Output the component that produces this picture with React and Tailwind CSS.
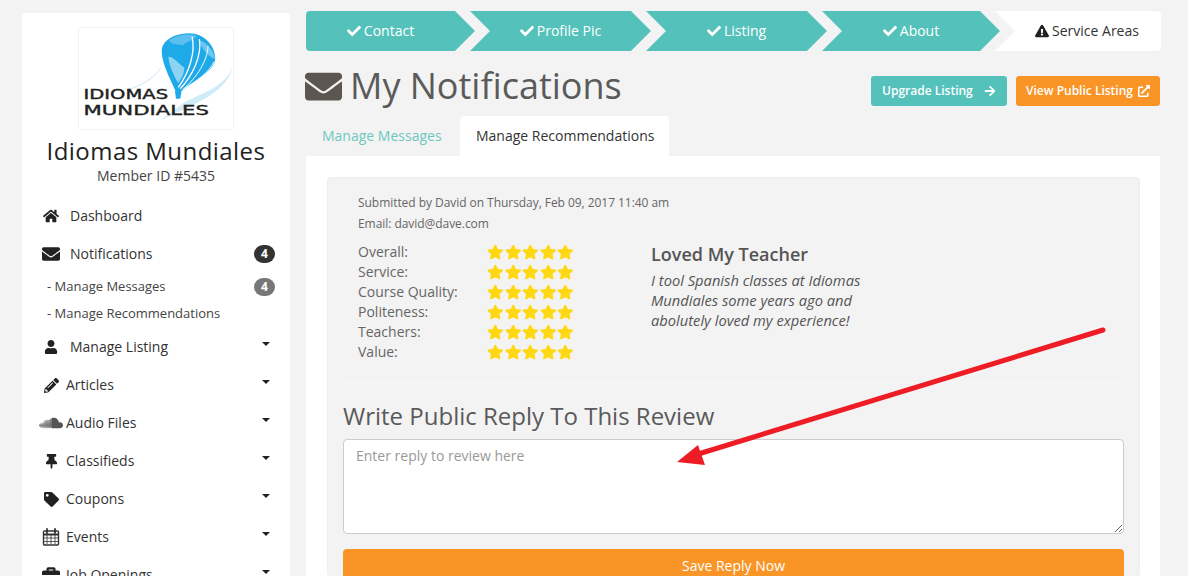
import React from "react";
import {
  FaArrowRight,
  FaBriefcase,
  FaCheck,
  FaEnvelope,
  FaExclamationTriangle,
  FaExternalLinkAlt,
  FaHome,
  FaPencilAlt,
  FaSoundcloud,
  FaStar,
  FaTag,
  FaThumbtack,
  FaUser,
} from "react-icons/fa";

const steps = [
  { label: "Contact", width: "w-[169px]" },
  { label: "Profile Pic", width: "w-[181px]" },
  { label: "Listing", width: "w-[181px]" },
  { label: "About", width: "w-[178px]" },
];

const ratings = ["Overall:", "Service:", "Course Quality:", "Politeness:", "Teachers:", "Value:"];

const CalendarIcon = () => (
  <svg width="18" height="18" viewBox="0 0 18 18" fill="none" stroke="#333">
    <rect x="1.5" y="3" width="15" height="14" rx="1" strokeWidth="1.4" />
    <path d="M1 6.5h16" strokeWidth="2" />
    <path d="M5 7v9M9 7v9M13 7v9M2 10h14M2 13.5h14" strokeWidth="0.8" />
    <path d="M5 1v4M13 1v4" strokeWidth="1.8" strokeLinecap="round" />
  </svg>
);

const menuItems = [
  { label: "Manage Listing", icon: <FaUser size={14} />, gap: "ml-[7px]" },
  { label: "Articles", icon: <FaPencilAlt size={15} />, gap: "ml-[3px]" },
  { label: "Audio Files", icon: <FaSoundcloud size={24} className="text-[#555]" />, gap: "ml-[3px]" },
  { label: "Classifieds", icon: <FaThumbtack size={15} />, gap: "ml-[3px]" },
  { label: "Coupons", icon: <FaTag size={15} />, gap: "ml-[3px]" },
  { label: "Events", icon: <CalendarIcon />, gap: "ml-[3px]" },
  { label: "Job Openings", icon: <FaBriefcase size={18} />, gap: "ml-[3px]" },
];

const Logo = () => (
  <svg viewBox="25 22 465 306" className="w-full h-full">
    <path d="M170 210 C215 195 250 175 272 143" fill="none" stroke="#c5e8f6" strokeWidth="3" />
    <g transform="translate(255 24)">
      <path d="M15 278 C95 240 215 200 235 118 C215 170 150 195 90 222 Z" fill="#cfecf8" />
      <path
        d="M100 14 C145 12 182 50 182 90 C182 125 125 155 78 190 L62 190 C50 160 18 105 20 65 C22 35 60 15 100 14 Z"
        fill="#1ea9e8"
      />
      <path d="M42 35 C65 18 100 14 125 22 C115 40 95 35 85 50 C65 45 50 50 42 35 Z" fill="#5cc0ee" />
      <path d="M135 35 C160 45 180 70 181 92 C165 85 140 65 135 35 Z" fill="#6cc7f0" />
      <path d="M40 85 C55 85 65 100 88 118 C88 140 80 150 70 165 C55 140 42 110 40 85 Z" fill="#8fd3f3" />
      <path d="M112 24 C122 70 105 130 70 178" fill="none" stroke="#fff" strokeWidth="4" />
      <path d="M134 32 C142 80 115 140 76 182" fill="none" stroke="#fff" strokeWidth="4" />
      <path d="M160 52 C160 95 125 150 84 184" fill="none" stroke="#f0faff" strokeWidth="3" />
      <path d="M178 100 C165 130 125 160 90 180" fill="none" stroke="#e4f5fc" strokeWidth="3" />
      <path d="M60 188 L80 188 L76 212 L63 212 Z" fill="#1ea9e8" />
    </g>
    <text x="38" y="236" textLength="256" lengthAdjust="spacingAndGlyphs" fontFamily="DejaVu Sans, sans-serif" fontSize="41" stroke="#222" strokeWidth="1.2" fill="#222">
      IDIOMAS
    </text>
    <text x="38" y="285" textLength="380" lengthAdjust="spacingAndGlyphs" fontFamily="DejaVu Sans, sans-serif" fontSize="44" stroke="#222" strokeWidth="1.2" fill="#222">
      MUNDIALES
    </text>
  </svg>
);

const Caret = () => (
  <span className="ml-auto mr-[20px] mb-[6px] border-x-4 border-t-4 border-x-transparent border-t-[#222]" />
);

const Sidebar = () => (
  <aside className="w-[268px] mt-[13px] bg-white rounded-t text-[#333] shrink-0">
    <div className="mx-auto mt-[14px] w-[156px] h-[103px] border border-[#f3f3f3] rounded">
      <Logo />
    </div>
    <h2 className="mt-[6px] text-center text-[24px] font-medium tracking-[0.45px] leading-[30px] text-[#222]">Idiomas Mundiales</h2>
    <p className="text-center text-sm leading-[19px] text-[#444]">Member ID #5435</p>
    <nav className="mt-[12px] pl-[17px] text-sm">
      <div className="h-[38px] flex items-center">
        <span className="w-[24px] flex justify-center text-[#222]"><FaHome size={16} /></span>
        <span className="ml-[7px]">Dashboard</span>
      </div>
      <div className="h-[38px] flex items-center">
        <span className="w-[24px] flex justify-center text-[#222]"><FaEnvelope size={18} /></span>
        <span className="ml-[7px]">Notifications</span>
        <span className="ml-auto mr-[15px] w-[21px] h-[18px] rounded-full bg-[#333] text-white text-xs font-bold flex items-center justify-center">4</span>
      </div>
      <div className="h-[27px] flex items-center pl-[8px] text-[13px] text-[#444]">
        <span>- Manage Messages</span>
        <span className="ml-auto mr-[15px] w-[21px] h-[18px] rounded-full bg-[#777] text-white text-xs font-bold flex items-center justify-center">4</span>
      </div>
      <div className="h-[27px] flex items-center pl-[8px] text-[13px] text-[#444] mb-px">
        <span>- Manage Recommendations</span>
      </div>
      {menuItems.map((item) => (
        <div key={item.label} className="h-[38px] flex items-center">
          <span className="w-[24px] flex justify-center text-[#222]">{item.icon}</span>
          <span className={item.gap}>{item.label}</span>
          <Caret />
        </div>
      ))}
    </nav>
  </aside>
);

const Stepper = () => (
  <div className="flex h-[40px] text-sm">
    {steps.map((step, idx) => (
      <div
        key={step.label}
        className={
          idx === 0
            ? `${step.width} pr-[20px] bg-[#54c2ba] text-white flex items-center justify-center gap-[3px] rounded-l [clip-path:polygon(0_0,calc(100%-20px)_0,100%_50%,calc(100%-20px)_100%,0_100%)]`
            : `${step.width} -ml-[5px] bg-[#54c2ba] text-white flex items-center justify-center gap-[3px] [clip-path:polygon(0_0,calc(100%-20px)_0,100%_50%,calc(100%-20px)_100%,0_100%,20px_50%)]`
        }
      >
        <FaCheck size={14} />
        <span>{step.label}</span>
      </div>
    ))}
    <div className="w-[166px] -ml-[5px] pl-[20px] pr-[2px] bg-white text-[#333] flex items-center justify-center gap-[3px] rounded-r [clip-path:polygon(0_0,100%_0,100%_100%,0_100%,20px_50%)]">
      <FaExclamationTriangle size={14} className="text-[#222]" />
      <span>Service Areas</span>
    </div>
  </div>
);

const Stars = () => (
  <div className="flex gap-[1.1px] text-[#ffd814]">
    {[0, 1, 2, 3, 4].map((i) => (
      <FaStar key={i} className="w-[16.5px] h-[16px]" />
    ))}
  </div>
);

export default function App() {
  return (
    <div className="relative h-[576px] overflow-hidden bg-[#f3f3f3] font-['Open_Sans',sans-serif] flex pl-[22px]">
      <Sidebar />
      <main className="ml-[16px] w-[855px] pt-[11px] shrink-0">
        <Stepper />

        <div className="h-[65px] flex items-end justify-between pb-[10px] pr-[1px]">
          <h1 className="flex items-center text-[36px] leading-[40px] text-[#5a5a5a] -ml-px">
            <FaEnvelope className="w-[37px] h-[37px] text-[#5c5650] mr-[9px]" />
            <span className="-ml-px">My Notifications</span>
          </h1>
          <div className="flex gap-[9px] text-xs font-semibold text-white">
            <button className="w-[136px] h-[30px] bg-[#54c2ba] rounded-[3px] flex items-center justify-between px-[11px]">
              Upgrade Listing
              <FaArrowRight size={12} />
            </button>
            <button className="w-[144px] h-[30px] bg-[#f99427] rounded-[3px] flex items-center justify-between px-[10px]">
              View Public Listing
              <FaExternalLinkAlt size={12} />
            </button>
          </div>
        </div>

        <div className="flex h-[40px] text-sm">
          <div className="w-[154px] pl-4 flex items-center text-[#6cc8bf]">Manage Messages</div>
          <div className="w-[209px] pl-4 flex items-center bg-white text-[#333] rounded-t">Manage Recommendations</div>
        </div>

        <div className="bg-white w-[854px] h-[420px] pt-[21px] px-[21px]">
          <div className="w-[813px] h-[400px] bg-[#f3f3f3] rounded border border-[#efefef] px-[15px]">
            <div className="h-[205px] border-b border-[#f7f7f7] pl-[15px] pt-[14px] text-[#666]">
              <p className="text-xs leading-[21px] tracking-[-0.05px]">Submitted by David on Thursday, Feb 09, 2017 11:40 am</p>
              <p className="text-xs leading-[21px] tracking-[-0.05px]">Email: david@dave.com</p>
              <div className="flex mt-[8px]">
                <div className="w-[293px] text-sm leading-[20px]">
                  {ratings.map((r) => (
                    <div key={r} className="flex items-center h-[20px]">
                      <span className="w-[129px]">{r}</span>
                      <Stars />
                    </div>
                  ))}
                </div>
                <div>
                  <h3 className="text-lg leading-[24px] font-semibold text-[#555]">Loved My Teacher</h3>
                  <p className="mt-[4px] w-[230px] text-[14.7px] leading-[20px] italic text-[#555]">
                    I tool Spanish classes at Idiomas Mundiales some years ago and abolutely loved my experience!
                  </p>
                </div>
              </div>
            </div>
            <h3 className="mt-[17px] text-2xl leading-[32px] text-[#5a5a5a]">Write Public Reply To This Review</h3>
            <textarea
              placeholder="Enter reply to review here"
              className="block mt-[7px] w-full h-[95px] bg-white border border-[#ccc] rounded px-[12px] py-[6px] text-sm leading-[20px] placeholder:text-[#999]"
            />
            <button className="block mt-[15px] w-full h-[34px] bg-[#f99427] rounded text-sm font-medium text-white">
              Save Reply Now
            </button>
          </div>
        </div>
      </main>

      {/* red annotation arrow drawn over the page */}
      <svg className="absolute left-0 top-0 pointer-events-none" width="1188" height="576">
        <line x1="1103" y1="330" x2="695" y2="455" stroke="#ee1c25" strokeWidth="5" strokeLinecap="round" />
        <polygon points="677,462 698,445 705,465" fill="#ee1c25" />
      </svg>
    </div>
  );
}
